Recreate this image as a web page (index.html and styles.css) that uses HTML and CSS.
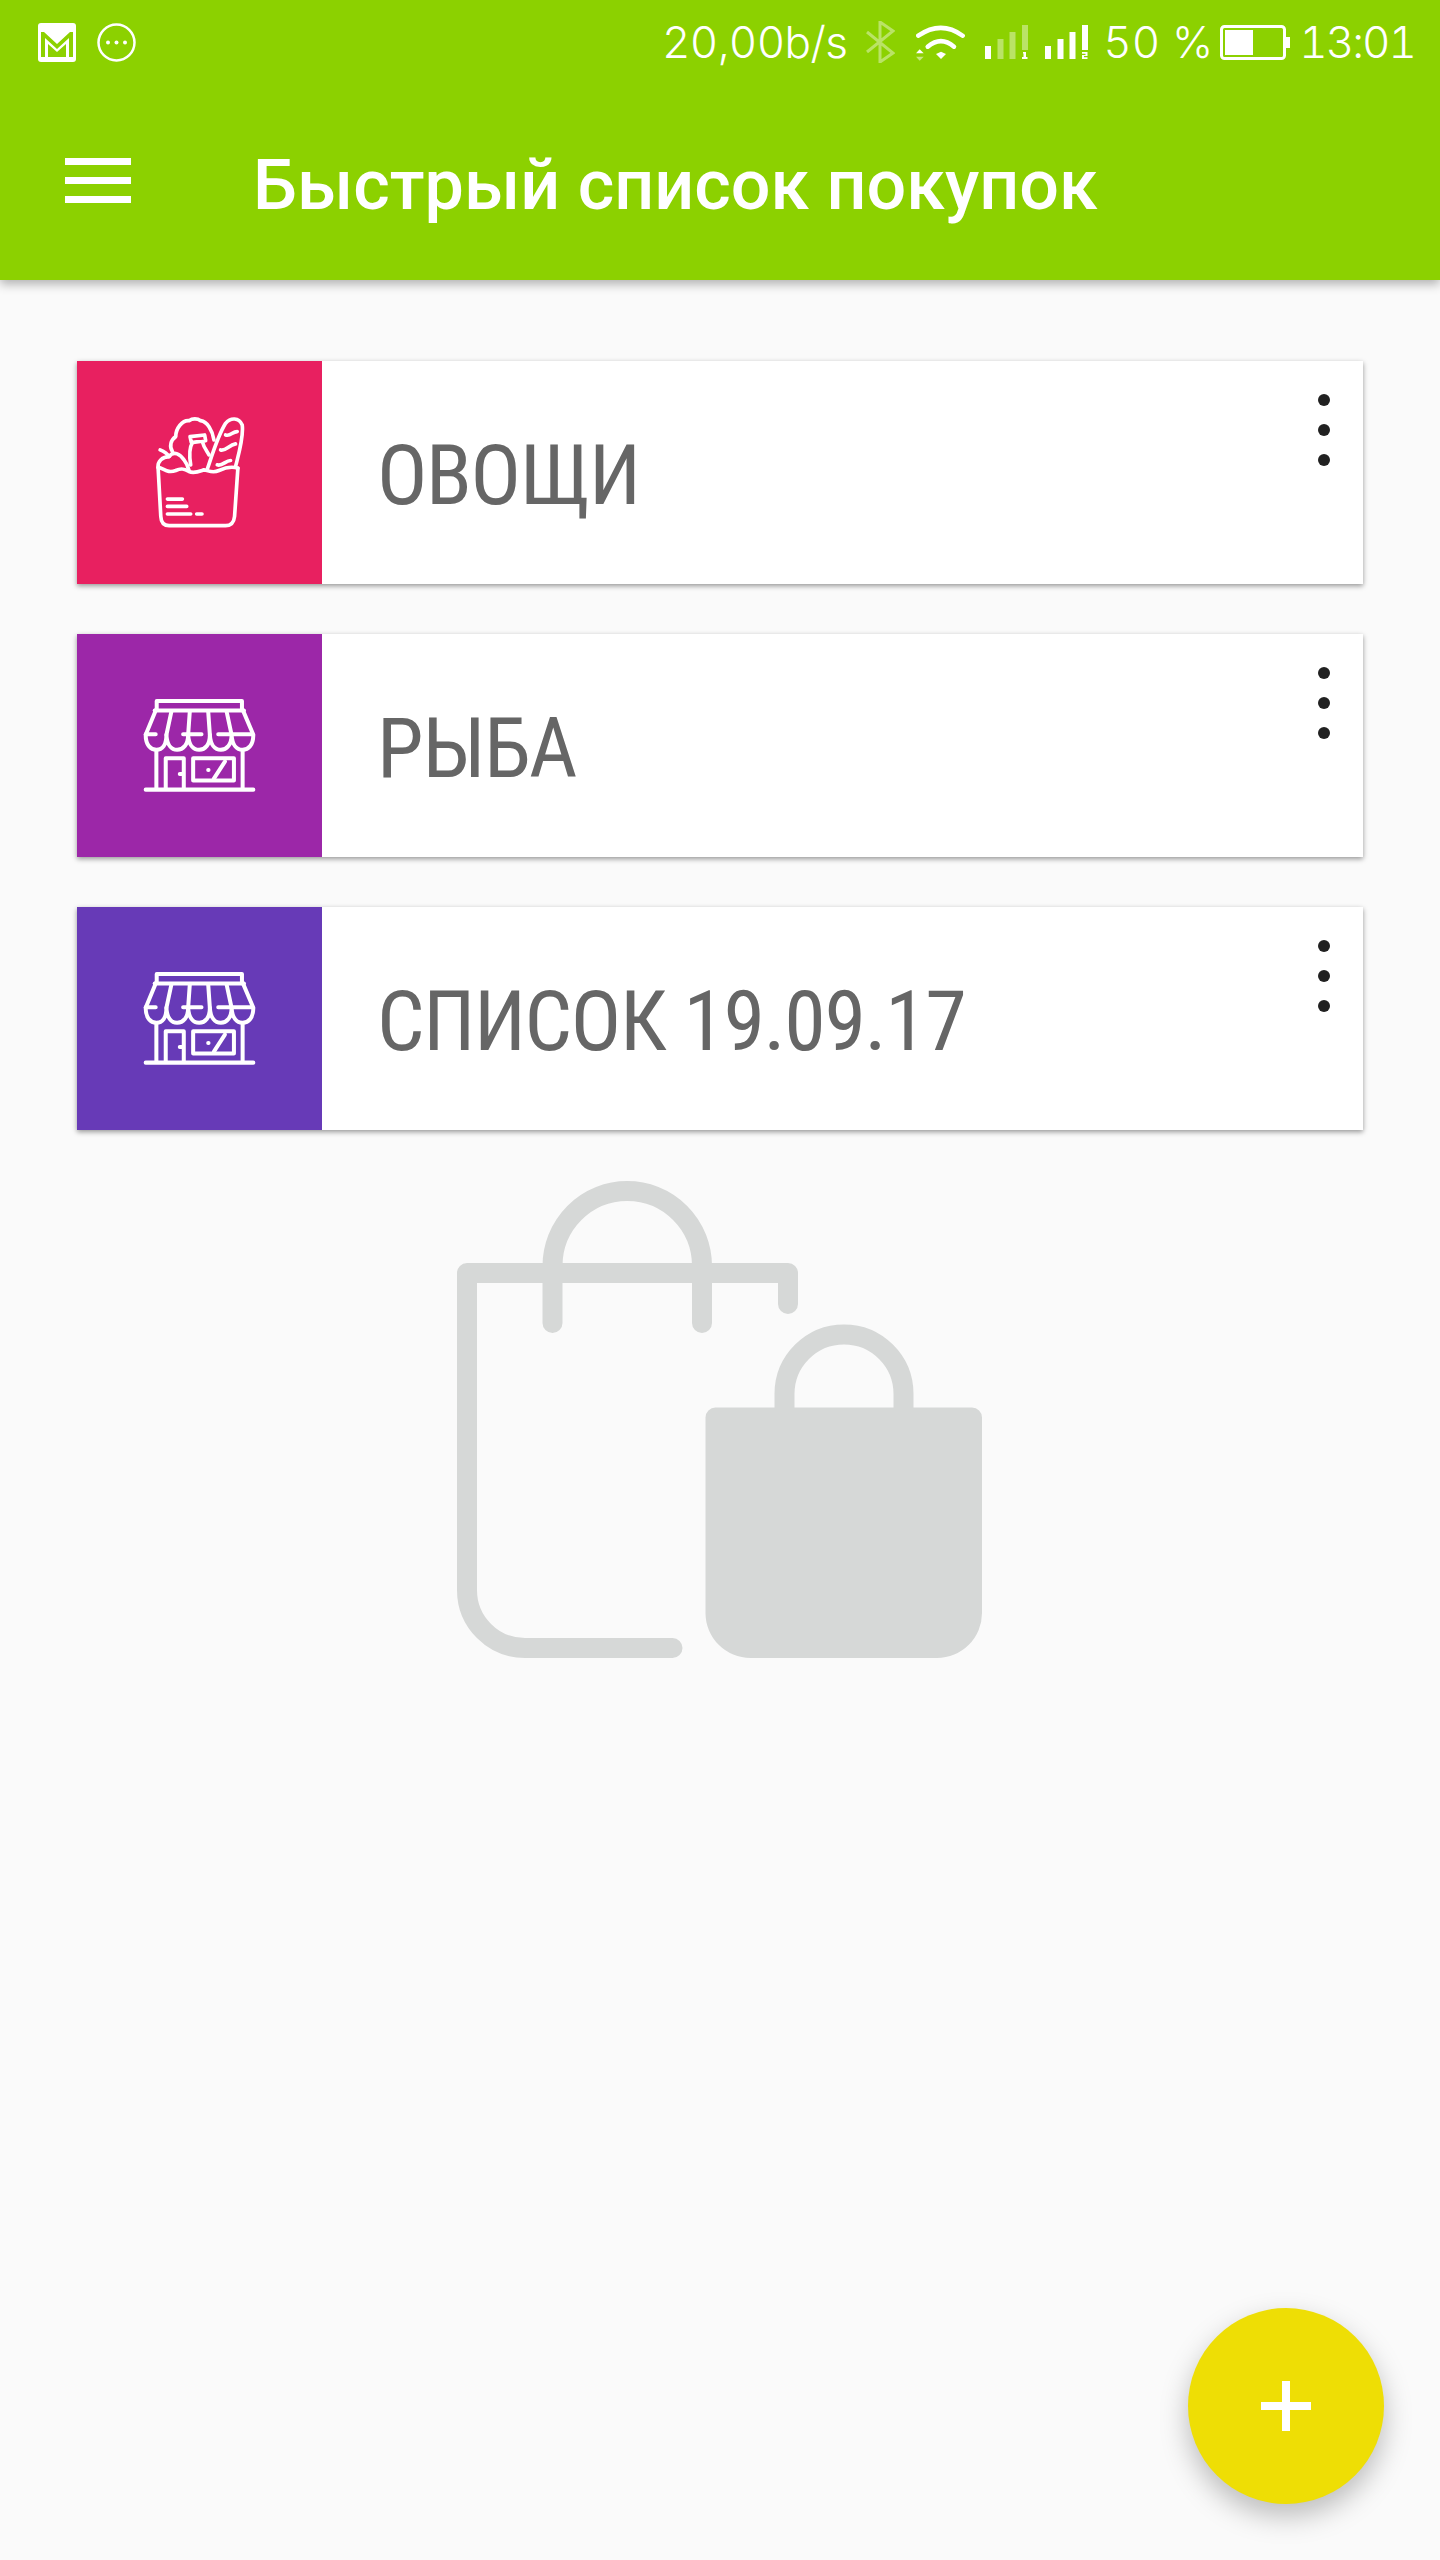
FILE: index.html
```html
<!DOCTYPE html>
<html lang="en">
  <head>
    <title>Быстрый список покупок</title>
    <link rel="stylesheet" href="styles.css">
  </head>
  <body>
    <div class="screen">
      <header class="app-header">
        <div class="status-bar">
          <div class="status-left">
            <svg width="38" height="39" viewBox="0 0 38 39">
              <rect width="38" height="39" rx="3" fill="#fff"/>
              <path d="M3 34V9h3l13 12L32 9h3v25h-4V15L19 26 7 15v19z" fill="#8cd100"/>
              <path d="M10 34V21l9 8 9-8v13z" fill="#8cd100"/>
            </svg>
            <svg width="39" height="39" viewBox="0 0 39 39">
              <circle cx="19.5" cy="19.5" r="18" fill="none" stroke="#fff" stroke-width="2.5"/>
              <circle cx="11" cy="19.5" r="2" fill="#fff"/>
              <circle cx="19.5" cy="19.5" r="2" fill="#fff"/>
              <circle cx="28" cy="19.5" r="2" fill="#fff"/>
            </svg>
          </div>
          <div class="status-right">
            <span class="speed">20,00b/s</span>
            <svg class="icon-bt" width="30" height="42" viewBox="0 0 30 42">
              <path d="M2 11l26 21-13 9V1l13 9L2 31" fill="none" stroke="#fff" stroke-opacity=".4" stroke-width="3"/>
            </svg>
            <svg class="icon-wifi" width="50" height="37" viewBox="0 0 50 37">
              <path d="M2.3 11.7Q25-4 46.7 11.7" fill="none" stroke="#fff" stroke-width="4.5" stroke-linecap="round"/>
              <path d="M11.7 22.7Q25 11.5 38 22.7" fill="none" stroke="#fff" stroke-width="4.5" stroke-linecap="round"/>
              <path d="M20 30l5-2.3 5 2.3-5 5z" fill="#fff"/>
              <path d="M0 29.3l3.7-4 4 4z" fill="#fff"/>
              <path d="M0 32.7h7.7l-4 4z" fill="#fff" fill-opacity=".5"/>
            </svg>
            <svg class="icon-signal" width="43" height="34" viewBox="0 0 43 34">
              <rect x="0" y="21" width="6" height="13" fill="#fff"/>
              <rect x="12.5" y="14" width="6" height="20" fill="#fff" fill-opacity=".4"/>
              <rect x="24.5" y="7" width="6" height="27" fill="#fff" fill-opacity=".4"/>
              <rect x="37" y="0" width="6" height="25" fill="#fff" fill-opacity=".4"/>
              <path d="M38 27h3v5h1.5v2H37v-2h1.5v-3.5H38z" fill="#fff"/>
            </svg>
            <svg class="icon-signal" width="43" height="34" viewBox="0 0 43 34">
              <rect x="0" y="21" width="6" height="13" fill="#fff"/>
              <rect x="12.5" y="14" width="6" height="20" fill="#fff"/>
              <rect x="24.5" y="7" width="6" height="27" fill="#fff"/>
              <rect x="37" y="0" width="6" height="25" fill="#fff"/>
              <path d="M37 27h5.5v4H39v1.2h3.5V34H37v-4h3.5v-1.2H37z" fill="#fff"/>
            </svg>
            <span class="battery-text">50 %</span>
            <svg class="icon-battery" width="71" height="35" viewBox="0 0 71 35">
              <rect x="1.5" y="1.5" width="63" height="32" rx="3" fill="none" stroke="#fff" stroke-width="3"/>
              <rect x="5" y="5" width="28" height="25" fill="#fff"/>
              <rect x="66" y="12" width="4" height="11" fill="#fff"/>
            </svg>
            <span class="clock">13:01</span>
          </div>
        </div>
        <div class="toolbar">
          <div class="menu-icon">
            <span></span>
            <span></span>
            <span></span>
          </div>
          <h1>Быстрый список покупок</h1>
        </div>
      </header>

      <main class="content">
        <div class="list-card">
          <div class="card-icon pink">
            <svg width="90" height="113" viewBox="283 228 270 340" fill="none" stroke="#fff" stroke-width="11" stroke-linecap="round" stroke-linejoin="round">
              <path d="M292 385L300 530C301 550 312 558 325 558H495C510 558 520 550 522 530L532 385"/>
              <path d="M292 382C310 385 320 402 345 392C360 385 370 385 385 395C400 402 415 395 430 390C445 392 455 402 475 392C490 385 510 378 532 385"/>
              <path d="M292 382C290 365 305 350 325 350C340 330 360 345 370 360C378 370 382 380 385 392"/>
              <path d="M298 330C310 335 320 342 325 350"/>
              <path d="M335 335C325 320 330 300 345 290C345 265 365 240 385 242C395 235 410 235 420 242C440 245 455 270 460 300"/>
              <path d="M388 290L432 285L435 302L392 308z"/>
              <path d="M395 308C385 325 385 345 390 375M425 305C430 325 440 335 445 345"/>
              <path d="M440 388C450 360 470 290 495 250C510 232 535 232 545 255C550 290 535 340 525 380"/>
              <path d="M495 285C510 290 515 275 530 275M480 330C495 335 505 315 525 312M470 375C485 380 495 362 510 362"/>
              <path d="M320 478H365M320 500H378M320 523H390M408 523H424"/>
            </svg>
          </div>
          <div class="card-title">ОВОЩИ</div>
          <div class="card-menu"><i></i><i></i><i></i></div>
        </div>

        <div class="list-card">
          <div class="card-icon purple">
            <svg width="113" height="95" viewBox="250 235 338 284" fill="none" stroke="#fff" stroke-width="12" stroke-linecap="round" stroke-linejoin="round">
              <path d="M291 270V244H546V270"/>
              <path d="M285 272H552"/>
              <path d="M288 272L258 345C258 375 272 390 290 390C308 390 320 375 320 345C322 375 335 390 352 390C370 390 385 375 385 345C387 375 400 390 418 390C436 390 450 375 450 345C452 375 465 390 483 390C500 390 515 375 515 345C517 375 530 390 548 390C566 390 580 375 580 345L549 272"/>
              <path d="M335 275L320 345M390 275L385 345M445 275L450 345M500 275L515 345"/>
              <path d="M258 343H288M370 343H425M475 343H578"/>
              <path d="M290 392V505M548 392V505M258 509H580"/>
              <path d="M318 505V415H372V505M372 462H360"/>
              <path d="M400 415H522V482H400z"/>
              <path d="M495 425L462 476M445 450H446"/>
            </svg>
          </div>
          <div class="card-title">РЫБА</div>
          <div class="card-menu"><i></i><i></i><i></i></div>
        </div>

        <div class="list-card">
          <div class="card-icon indigo">
            <svg width="113" height="95" viewBox="250 235 338 284" fill="none" stroke="#fff" stroke-width="12" stroke-linecap="round" stroke-linejoin="round">
              <path d="M291 270V244H546V270"/>
              <path d="M285 272H552"/>
              <path d="M288 272L258 345C258 375 272 390 290 390C308 390 320 375 320 345C322 375 335 390 352 390C370 390 385 375 385 345C387 375 400 390 418 390C436 390 450 375 450 345C452 375 465 390 483 390C500 390 515 375 515 345C517 375 530 390 548 390C566 390 580 375 580 345L549 272"/>
              <path d="M335 275L320 345M390 275L385 345M445 275L450 345M500 275L515 345"/>
              <path d="M258 343H288M370 343H425M475 343H578"/>
              <path d="M290 392V505M548 392V505M258 509H580"/>
              <path d="M318 505V415H372V505M372 462H360"/>
              <path d="M400 415H522V482H400z"/>
              <path d="M495 425L462 476M445 450H446"/>
            </svg>
          </div>
          <div class="card-title">СПИСОК 19.09.17</div>
          <div class="card-menu"><i></i><i></i><i></i></div>
        </div>

        <div class="empty-state">
          <svg width="525" height="477" viewBox="0 0 525 477">
            <path d="M331 123V92H10V409a58 58 0 0 0 58 58H215.5M95.5 142V85a74.75 75 0 0 1 149.5 0V142" fill="none" stroke="#d6d8d7" stroke-width="20" stroke-linecap="round" stroke-linejoin="round"/>
            <path d="M248.5 236.6a10 10 0 0 1 10-10H515a10 10 0 0 1 10 10V432a45 45 0 0 1-45 45H293.5a45 45 0 0 1-45-45z" fill="#d6d8d7"/>
            <path d="M327.5 230V213a59.5 59.5 0 0 1 119 0V230" fill="none" stroke="#d6d8d7" stroke-width="20"/>
          </svg>
        </div>
      </main>

      <div class="fab">
        <span class="fab-h"></span>
        <span class="fab-v"></span>
      </div>
    </div>
  </body>
</html>
```

FILE: styles.css
```css
* {
  box-sizing: border-box;
}

body {
  margin: 0;
  background-color: #fafafa;
  font-family: Roboto, "Noto Sans", sans-serif;
}

.screen {
  position: relative;
  width: 1440px;
  height: 2560px;
  overflow: hidden;
}

.app-header {
  height: 280px;
  background-color: #8cd100;
  color: #fff;
  box-shadow: 0 4px 10px rgba(0, 0, 0, 0.3);
}

.status-bar {
  display: flex;
  justify-content: space-between;
  align-items: center;
  height: 84px;
  padding: 0 25px 0 38px;
}

.status-left {
  display: flex;
  align-items: center;
  gap: 21px;
}

.status-right {
  display: flex;
  align-items: center;
  font-family: Inter, sans-serif;
  font-size: 44px;
  font-weight: 300;
  font-variant-numeric: tabular-nums;
}

.speed {
  margin-right: 18px;
  letter-spacing: -0.6px;
}

.icon-bt {
  margin-right: 21px;
}

.icon-wifi {
  margin-right: 19px;
}

.icon-signal {
  margin-right: 17px;
}

.battery-text {
  margin-left: -2px;
  margin-right: 7px;
}

.icon-battery {
  margin-right: 8px;
}

.clock {
  letter-spacing: -2px;
}

.toolbar {
  display: flex;
  align-items: center;
  height: 196px;
  padding-left: 65px;
}

.menu-icon {
  display: flex;
  flex-direction: column;
  gap: 12px;
  width: 66px;
  margin-right: 122px;
  margin-bottom: 3px;
}

.menu-icon span {
  height: 7px;
  background-color: #fff;
}

.toolbar h1 {
  margin: 6px 0 0;
  font-family: Roboto, sans-serif;
  font-size: 70px;
  font-weight: 500;
  line-height: 1;
  font-stretch: 90%;
}

.content {
  display: flex;
  flex-direction: column;
  gap: 50px;
  padding: 81px 77px 0;
}

.list-card {
  position: relative;
  display: flex;
  align-items: center;
  height: 223px;
  background-color: #fff;
  box-shadow: 0 2px 5px rgba(0, 0, 0, 0.4);
}

.card-icon {
  display: flex;
  align-items: center;
  justify-content: center;
  width: 245px;
  height: 100%;
}

.pink {
  background-color: #e82060;
}

.purple {
  background-color: #9c27a8;
}

.indigo {
  background-color: #673ab7;
}

.card-title {
  padding: 6px 0 0 55px;
  color: #666;
  font-family: Roboto, sans-serif;
  font-size: 84px;
  font-stretch: 75%;
  letter-spacing: -1.4px;
}

.card-menu {
  position: absolute;
  top: 33px;
  right: 33px;
  display: flex;
  flex-direction: column;
  gap: 18px;
}

.card-menu i {
  display: block;
  width: 12px;
  height: 12px;
  border-radius: 50%;
  background-color: #212121;
}

.empty-state {
  display: flex;
  margin-top: 1px;
  margin-left: 380px;
}

.fab {
  position: absolute;
  left: 1188px;
  top: 2308px;
  width: 196px;
  height: 196px;
  border-radius: 50%;
  background-color: #eede05;
  box-shadow: 0 12px 28px rgba(0, 0, 0, 0.25);
}

.fab-h {
  position: absolute;
  left: 73px;
  top: 94px;
  width: 50px;
  height: 8px;
  background-color: #fff;
}

.fab-v {
  position: absolute;
  left: 94px;
  top: 73px;
  width: 8px;
  height: 50px;
  background-color: #fff;
}
```
